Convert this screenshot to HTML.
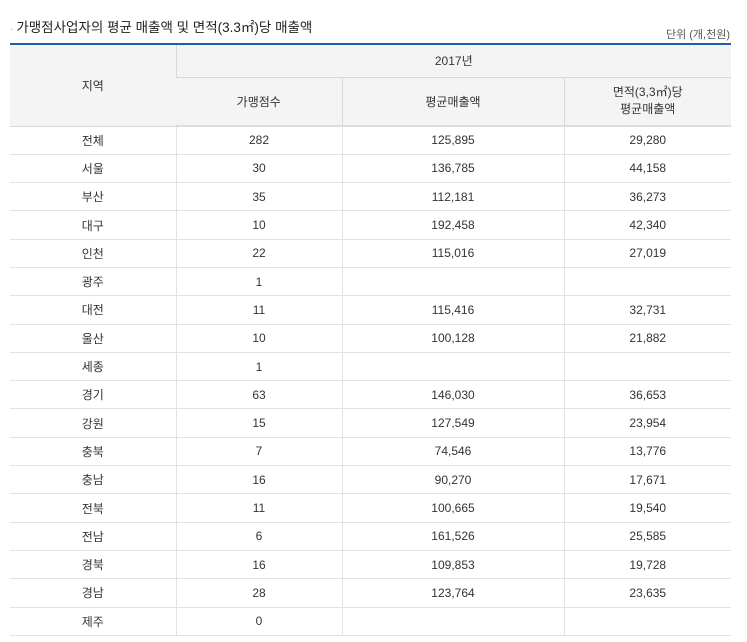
<!DOCTYPE html>
<html><head><meta charset="utf-8"><style>
body{margin:0;background:#fff;font-family:"Liberation Sans","Noto Sans CJK KR",sans-serif;color:#333;}
.title{position:absolute;left:10px;top:16px;font-size:13.5px;color:#222;}
.title:before{content:"·";color:#999;margin-right:3px;font-size:10px;}
.unit{position:absolute;right:17px;top:26px;font-size:11px;color:#555;}
table{position:absolute;left:10px;top:43px;width:721px;border-collapse:collapse;font-size:12px;table-layout:fixed;border-top:2px solid #1f5ea8;}
td,th{text-align:center;border-bottom:1px solid #e2e2e2;border-left:1px solid #e2e2e2;padding:0;}
tr td:first-child,tr th:first-child{border-left:none;}
th{background:#f4f4f4;font-weight:normal;color:#333;border-color:#d8d8d8;}
thead tr:last-child th{border-bottom:2px solid #dcdcdc;}
tbody tr{height:28.3px;}
</style></head><body>
<div class="title">가맹점사업자의 평균 매출액 및 면적(3.3㎡)당 매출액</div>
<div class="unit">단위 (개,천원)</div>
<table>
<colgroup><col style="width:166px"><col style="width:166px"><col style="width:222px"><col style="width:167px"></colgroup>
<thead>
<tr style="height:33px"><th rowspan="2">지역</th><th colspan="3">2017년</th></tr>
<tr style="height:49px"><th>가맹점수</th><th>평균매출액</th><th style="line-height:17px">면적(3,3㎡)당<br>평균매출액</th></tr>
</thead>
<tbody>
<tr><td>전체</td><td>282</td><td>125,895</td><td>29,280</td></tr>
<tr><td>서울</td><td>30</td><td>136,785</td><td>44,158</td></tr>
<tr><td>부산</td><td>35</td><td>112,181</td><td>36,273</td></tr>
<tr><td>대구</td><td>10</td><td>192,458</td><td>42,340</td></tr>
<tr><td>인천</td><td>22</td><td>115,016</td><td>27,019</td></tr>
<tr><td>광주</td><td>1</td><td></td><td></td></tr>
<tr><td>대전</td><td>11</td><td>115,416</td><td>32,731</td></tr>
<tr><td>울산</td><td>10</td><td>100,128</td><td>21,882</td></tr>
<tr><td>세종</td><td>1</td><td></td><td></td></tr>
<tr><td>경기</td><td>63</td><td>146,030</td><td>36,653</td></tr>
<tr><td>강원</td><td>15</td><td>127,549</td><td>23,954</td></tr>
<tr><td>충북</td><td>7</td><td>74,546</td><td>13,776</td></tr>
<tr><td>충남</td><td>16</td><td>90,270</td><td>17,671</td></tr>
<tr><td>전북</td><td>11</td><td>100,665</td><td>19,540</td></tr>
<tr><td>전남</td><td>6</td><td>161,526</td><td>25,585</td></tr>
<tr><td>경북</td><td>16</td><td>109,853</td><td>19,728</td></tr>
<tr><td>경남</td><td>28</td><td>123,764</td><td>23,635</td></tr>
<tr><td>제주</td><td>0</td><td></td><td></td></tr>
</tbody>
</table>
</body></html>
